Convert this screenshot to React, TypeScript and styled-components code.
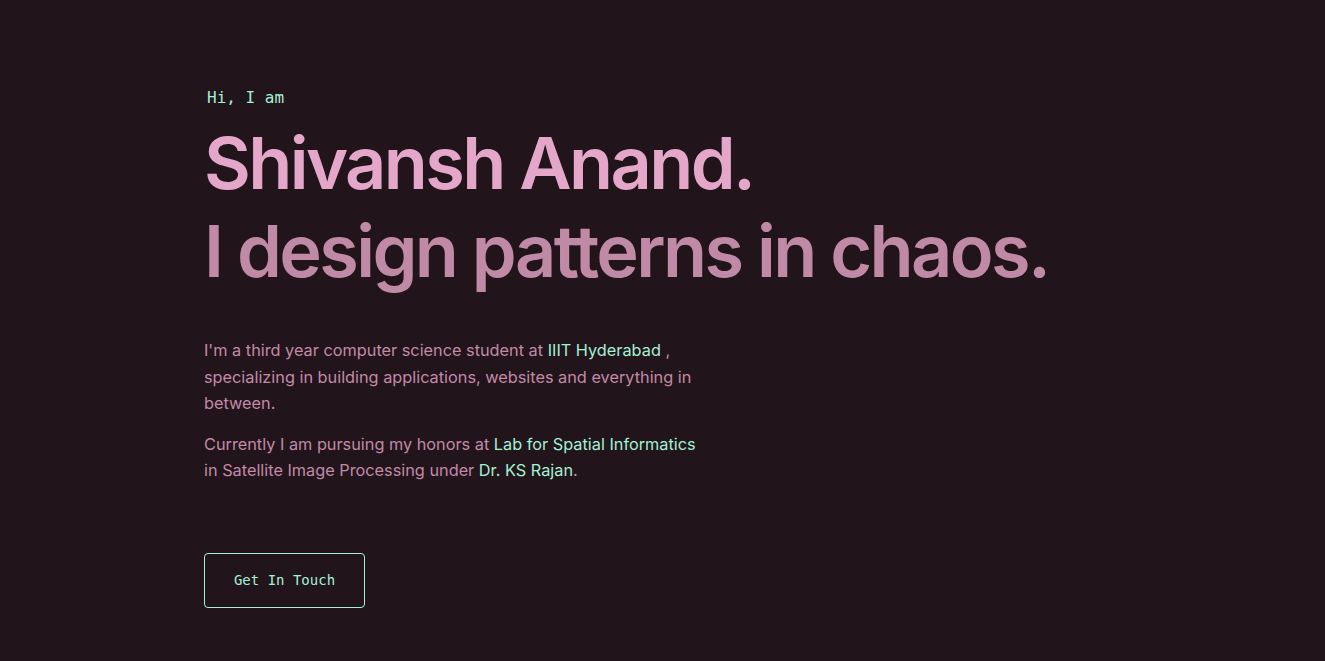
import React from "react";
import styled, { createGlobalStyle } from "styled-components";

const GlobalStyle = createGlobalStyle`
  html, body { margin: 0; padding: 0; background: #21141b; }
  body { font-family: Inter, "Noto Sans", sans-serif; -webkit-font-smoothing: antialiased; }
`;

const Hero = styled.section`
  min-height: 661px;
  box-sizing: border-box;
  padding: 86px 0 0 204px;
  display: flex;
  flex-direction: column;
  align-items: flex-start;
`;

const Intro = styled.h1`
  margin: 0 0 9px 3px;
  font-family: "DejaVu Sans Mono", "Liberation Mono", monospace;
  font-weight: 400;
  font-size: 16px;
  line-height: 24px;
  color: #a6f0d4;
`;

const Title = styled.h2<{ $tone: string }>`
  margin: 0;
  font-family: Inter, "Noto Sans", sans-serif;
  font-weight: 600;
  font-size: 72px;
  line-height: 88px;
  letter-spacing: -0.036em;
  color: ${(p) => p.$tone};
`;

const Bio = styled.div`
  margin-top: 42px;
  max-width: 500px;
  font-family: Inter, "Noto Sans", sans-serif;
  font-size: 16.3px;
  line-height: 26.5px;
  color: #c38aa7;
`;

const Para = styled.p`
  margin: 0 0 14px 0;
`;

const Accent = styled.a`
  color: #a6f0d4;
  text-decoration: none;
`;

const Button = styled.a`
  margin-top: 55px;
  display: inline-flex;
  align-items: center;
  justify-content: center;
  width: 161px;
  height: 55px;
  box-sizing: border-box;
  border: 1px solid #a6f0d4;
  border-radius: 4px;
  font-family: "DejaVu Sans Mono", "Liberation Mono", monospace;
  font-size: 14px;
  color: #a6f0d4;
  text-decoration: none;
`;

export default function App() {
  return (
    <>
      <GlobalStyle />
      <Hero>
        <Intro>Hi, I am</Intro>
        <Title $tone="#e4a7ca">Shivansh Anand.</Title>
        <Title $tone="#c089a5">I design patterns in chaos.</Title>
        <Bio>
          <Para>
            I'm a third year computer science student at <Accent href="#">IIIT Hyderabad</Accent> ,
            specializing in building applications, websites and everything in between.
          </Para>
          <Para>
            Currently I am pursuing my honors at <Accent href="#">Lab for Spatial Informatics</Accent> in
            Satellite Image Processing under <Accent href="#">Dr. KS Rajan</Accent>.
          </Para>
        </Bio>
        <Button href="#">Get In Touch</Button>
      </Hero>
    </>
  );
}
